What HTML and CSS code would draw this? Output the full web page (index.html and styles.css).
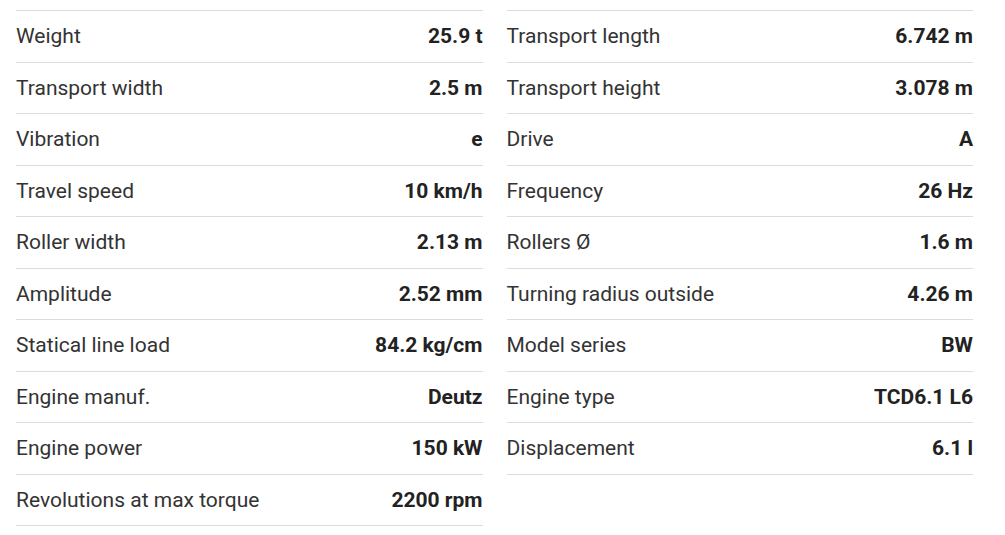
FILE: index.html
```html
<!DOCTYPE html>
<html>
<head>
<meta charset="utf-8">
<link rel="stylesheet" href="styles.css">
</head>
<body>
<div class="specs">
  <div class="col">
    <div class="row"><span class="label">Weight</span><span class="value">25.9 t</span></div>
    <div class="row"><span class="label">Transport width</span><span class="value">2.5 m</span></div>
    <div class="row"><span class="label">Vibration</span><span class="value">e</span></div>
    <div class="row"><span class="label">Travel speed</span><span class="value">10 km/h</span></div>
    <div class="row"><span class="label">Roller width</span><span class="value">2.13 m</span></div>
    <div class="row"><span class="label">Amplitude</span><span class="value">2.52 mm</span></div>
    <div class="row"><span class="label">Statical line load</span><span class="value">84.2 kg/cm</span></div>
    <div class="row"><span class="label">Engine manuf.</span><span class="value">Deutz</span></div>
    <div class="row"><span class="label">Engine power</span><span class="value">150 kW</span></div>
    <div class="row"><span class="label">Revolutions at max torque</span><span class="value">2200 rpm</span></div>
  </div>
  <div class="col">
    <div class="row"><span class="label">Transport length</span><span class="value">6.742 m</span></div>
    <div class="row"><span class="label">Transport height</span><span class="value">3.078 m</span></div>
    <div class="row"><span class="label">Drive</span><span class="value">A</span></div>
    <div class="row"><span class="label">Frequency</span><span class="value">26 Hz</span></div>
    <div class="row"><span class="label">Rollers Ø</span><span class="value">1.6 m</span></div>
    <div class="row"><span class="label">Turning radius outside</span><span class="value">4.26 m</span></div>
    <div class="row"><span class="label">Model series</span><span class="value">BW</span></div>
    <div class="row"><span class="label">Engine type</span><span class="value">TCD6.1 L6</span></div>
    <div class="row"><span class="label">Displacement</span><span class="value">6.1 l</span></div>
  </div>
</div>
</body>
</html>
```
FILE: styles.css
```css
html, body {
  margin: 0;
  padding: 0;
  background: #fff;
}
body {
  padding: 10px 32px 0 16px;
  font-family: Roboto, "Liberation Sans", sans-serif;
}
.specs {
  display: grid;
  grid-template-columns: 1fr 1fr;
  column-gap: 24px;
  align-items: start;
}
.col {
  border-top: 1px solid #dcdcdc;
}
.row {
  display: flex;
  justify-content: space-between;
  align-items: center;
  height: 50.5px;
  border-bottom: 1px solid #dcdcdc;
  font-size: 21px;
}
.label {
  color: #333;
}
.value {
  color: #222;
  font-weight: 700;
}
```
